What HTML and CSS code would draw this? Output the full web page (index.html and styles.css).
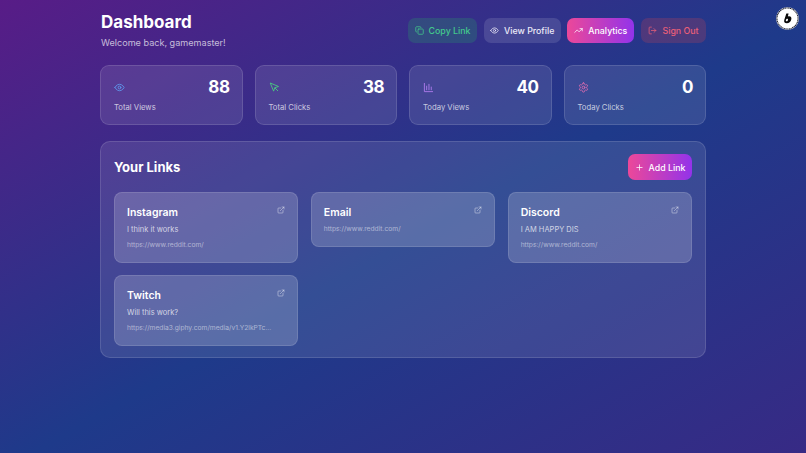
FILE: index.html
```html
<!DOCTYPE html>
<html lang="en">
<head>
<meta charset="utf-8">
<title>Dashboard</title>
<link rel="stylesheet" href="styles.css">
</head>
<body>
<div class="badge">
  <svg viewBox="0 0 24 24" width="23" height="23"><circle cx="12" cy="12" r="11.800" fill="#fff"/><circle cx="12" cy="12" r="11" fill="none" stroke="#1a1d2b" stroke-width="1.100" stroke-dasharray="1.300 .5"/><circle cx="12" cy="12" r="9.400" fill="#fff"/><path d="M10.800 6.800h2.300l-.7 3.100c2.500-.8 4.100.6 3.600 2.800-.5 2.500-2.500 4.200-4.700 4.200-2.100 0-3.200-1.200-2.700-3.400zm.9 5.400c-.7 0-1.200.6-1.400 1.400-.2.800.2 1.300.8 1.300.7 0 1.200-.6 1.400-1.300.2-.8-.1-1.400-.8-1.400z" fill="#0a0a0a"/></svg>
</div>
<main class="page">
  <header class="top">
    <div>
      <h1 class="title">Dashboard</h1>
      <p class="welcome">Welcome back, gamemaster!</p>
    </div>
    <nav class="actions">
      <a class="btn btn-green"><svg class="ic" viewBox="0 0 24 24"><rect x="8" y="8" width="14" height="14" rx="2"/><path d="M4 16c-1.100 0-2-.9-2-2V4c0-1.100.9-2 2-2h10c1.100 0 2 .9 2 2"/></svg>Copy Link</a>
      <a class="btn btn-glass"><svg class="ic" viewBox="0 0 24 24"><path d="M2 12s3.500-7 10-7 10 7 10 7-3.500 7-10 7-10-7-10-7z"/><circle cx="12" cy="12" r="3"/></svg>View Profile</a>
      <a class="btn btn-grad"><svg class="ic" viewBox="0 0 24 24"><path d="M22 7l-8.500 8.500-5-5L2 17"/><path d="M16 7h6v6"/></svg>Analytics</a>
      <a class="btn btn-red"><svg class="ic" viewBox="0 0 24 24"><path d="M9 21H5a2 2 0 0 1-2-2V5a2 2 0 0 1 2-2h4"/><path d="M16 17l5-5-5-5"/><path d="M21 12H9"/></svg>Sign Out</a>
    </nav>
  </header>

  <section class="stats">
    <div class="stat">
      <div class="stat-row"><svg class="stat-ic c-blue" viewBox="0 0 24 24"><path d="M2 12s3.500-7 10-7 10 7 10 7-3.500 7-10 7-10-7-10-7z"/><circle cx="12" cy="12" r="3"/></svg><span class="num">88</span></div>
      <div class="label">Total Views</div>
    </div>
    <div class="stat">
      <div class="stat-row"><svg class="stat-ic c-green" viewBox="0 0 24 24"><path d="M3 3l7.070 16.970 2.510-7.390 7.390-2.510z"/><path d="M13 13l6 6"/></svg><span class="num">38</span></div>
      <div class="label">Total Clicks</div>
    </div>
    <div class="stat">
      <div class="stat-row"><svg class="stat-ic c-purple" viewBox="0 0 24 24"><path d="M3 3v18h18"/><path d="M8 17v-8"/><path d="M13 17V5"/><path d="M18 17v-6"/></svg><span class="num">40</span></div>
      <div class="label">Today Views</div>
    </div>
    <div class="stat">
      <div class="stat-row"><svg class="stat-ic c-pink" viewBox="0 0 24 24"><path d="M12.220 2h-.44a2 2 0 0 0-2 2v.18a2 2 0 0 1-1 1.730l-.43.25a2 2 0 0 1-2 0l-.15-.08a2 2 0 0 0-2.730.73l-.22.38a2 2 0 0 0 .73 2.730l.15.1a2 2 0 0 1 1 1.720v.51a2 2 0 0 1-1 1.740l-.15.09a2 2 0 0 0-.73 2.730l.22.38a2 2 0 0 0 2.730.73l.15-.08a2 2 0 0 1 2 0l.43.25a2 2 0 0 1 1 1.730V20a2 2 0 0 0 2 2h.44a2 2 0 0 0 2-2v-.18a2 2 0 0 1 1-1.730l.43-.25a2 2 0 0 1 2 0l.15.08a2 2 0 0 0 2.730-.73l.22-.39a2 2 0 0 0-.73-2.730l-.15-.08a2 2 0 0 1-1-1.740v-.5a2 2 0 0 1 1-1.740l.15-.09a2 2 0 0 0 .73-2.730l-.22-.38a2 2 0 0 0-2.730-.73l-.15.08a2 2 0 0 1-2 0l-.43-.25a2 2 0 0 1-1-1.730V4a2 2 0 0 0-2-2z"/><circle cx="12" cy="12" r="3"/></svg><span class="num">0</span></div>
      <div class="label">Today Clicks</div>
    </div>
  </section>

  <section class="panel">
    <div class="panel-head">
      <h2 class="panel-title">Your Links</h2>
      <a class="btn btn-grad btn-add"><svg class="ic" viewBox="0 0 24 24"><path d="M5 12h14"/><path d="M12 5v14"/></svg>Add Link</a>
    </div>
    <div class="grid">
      <article class="card">
        <div class="card-head"><h3 class="card-title">Instagram</h3><svg class="ext" viewBox="0 0 24 24"><path d="M18 13v6a2 2 0 0 1-2 2H5a2 2 0 0 1-2-2V8a2 2 0 0 1 2-2h6"/><path d="M15 3h6v6"/><path d="M10 14L21 3"/></svg></div>
        <p class="desc">I think it works</p>
        <p class="url">https://www.reddit.com/</p>
      </article>
      <article class="card">
        <div class="card-head"><h3 class="card-title">Email</h3><svg class="ext" viewBox="0 0 24 24"><path d="M18 13v6a2 2 0 0 1-2 2H5a2 2 0 0 1-2-2V8a2 2 0 0 1 2-2h6"/><path d="M15 3h6v6"/><path d="M10 14L21 3"/></svg></div>
        <p class="url">https://www.reddit.com/</p>
      </article>
      <article class="card">
        <div class="card-head"><h3 class="card-title">Discord</h3><svg class="ext" viewBox="0 0 24 24"><path d="M18 13v6a2 2 0 0 1-2 2H5a2 2 0 0 1-2-2V8a2 2 0 0 1 2-2h6"/><path d="M15 3h6v6"/><path d="M10 14L21 3"/></svg></div>
        <p class="desc">I AM HAPPY DIS</p>
        <p class="url">https://www.reddit.com/</p>
      </article>
      <article class="card">
        <div class="card-head"><h3 class="card-title">Twitch</h3><svg class="ext" viewBox="0 0 24 24"><path d="M18 13v6a2 2 0 0 1-2 2H5a2 2 0 0 1-2-2V8a2 2 0 0 1 2-2h6"/><path d="M15 3h6v6"/><path d="M10 14L21 3"/></svg></div>
        <p class="desc">Will this work?</p>
        <p class="url">https://media3.giphy.com/media/v1.Y2lkPTc…</p>
      </article>
    </div>
  </section>
</main>
</body>
</html>
```
FILE: styles.css
```css
* { box-sizing: border-box; }
html, body { height: 100%; }
body {
  margin: 0;
  overflow: hidden;
  background: linear-gradient(to bottom right, #581c87 0%, #1e3a8a 52%, #372a85 100%);
  font-family: "Inter", "Noto Sans", sans-serif;
  color: #fff;
}
.badge { position: absolute; top: 7px; right: 7px; width: 23px; height: 23px; }
.badge svg { display: block; }
.page { width: 606px; margin-left: 100px; padding-top: 12px; }
.top { display: flex; justify-content: space-between; align-items: flex-start; height: 53px; }
.title { margin: 0 0 0 1px; font-size: 17px; line-height: 20px; font-weight: 700; }
.welcome { margin: 4px 0 0 1px; font-size: 9.100px; line-height: 14px; color: rgba(255,255,255,.7); }
.actions { display: flex; gap: 6.670px; margin-top: 6px; }
.btn {
  display: flex; align-items: center; justify-content: center; gap: 5px; height: 25px;
  border-radius: 7px; font-size: 8.800px; font-weight: 500; white-space: nowrap;
}
.ic { width: 9px; height: 9px; fill: none; stroke: currentColor; stroke-width: 2; stroke-linecap: round; stroke-linejoin: round; flex: none; }
.btn-green { background: rgba(34,197,94,.2); color: #43c98c; width: 69px; }
.btn-glass { background: rgba(255,255,255,.12); color: #ece9f8; width: 77px; }
.btn-grad { background: linear-gradient(90deg, #ec4899, #9333ea); color: #fff; width: 67px; }
.btn-red { background: rgba(239,68,68,.2); color: #ea5f78; width: 65px; }
.btn-add { width: 64px; height: 26px; }
.stats { display: grid; grid-template-columns: repeat(4, 1fr); gap: 12px; }
.stat {
  height: 60px; padding: 11px 12px 11px 13px; border-radius: 9px;
  background: rgba(255,255,255,.1); border: 1px solid rgba(255,255,255,.13);
}
.stat-row { display: flex; justify-content: space-between; align-items: center; height: 20px; }
.stat-ic { width: 11px; height: 11px; fill: none; stroke: currentColor; stroke-width: 2; stroke-linecap: round; stroke-linejoin: round; opacity: .85; }
.c-blue { color: #60a5fa; }
.c-green { color: #4ade80; }
.c-purple { color: #c084fc; }
.c-pink { color: #f472b6; }
.num { font-size: 17px; font-weight: 700; line-height: 20px; letter-spacing: -.5px; }
.label { margin-top: 5px; font-size: 7.700px; line-height: 12px; color: rgba(255,255,255,.72); }
.panel {
  margin-top: 16px; padding: 12px 13px; border-radius: 10px; height: 217px;
  background: rgba(255,255,255,.1); border: 1px solid rgba(255,255,255,.13);
}
.panel-head { display: flex; justify-content: space-between; align-items: flex-start; height: 26px; }
.panel-title { margin: 0; font-size: 13px; line-height: 26px; font-weight: 700; }
.grid { display: grid; grid-template-columns: repeat(3, 1fr); gap: 12.500px; margin-top: 12px; align-items: start; }
.card {
  padding: 13px 12px 10.500px; border-radius: 8px;
  background: rgba(255,255,255,.18); border: 1px solid rgba(255,255,255,.12);
}
.card-head { display: flex; justify-content: space-between; align-items: flex-start; height: 14px; }
.card-title { margin: 0; font-size: 10.500px; font-weight: 600; line-height: 14px; }
.ext { width: 8px; height: 8px; fill: none; stroke: rgba(255,255,255,.6); stroke-width: 2; stroke-linecap: round; stroke-linejoin: round; }
.desc { margin: 4px 0 0; font-size: 7.500px; line-height: 12px; color: rgba(255,255,255,.72); }
.url { margin: 4px 0 0; font-size: 6.700px; line-height: 11px; color: rgba(255,255,255,.5); white-space: nowrap; }
```
